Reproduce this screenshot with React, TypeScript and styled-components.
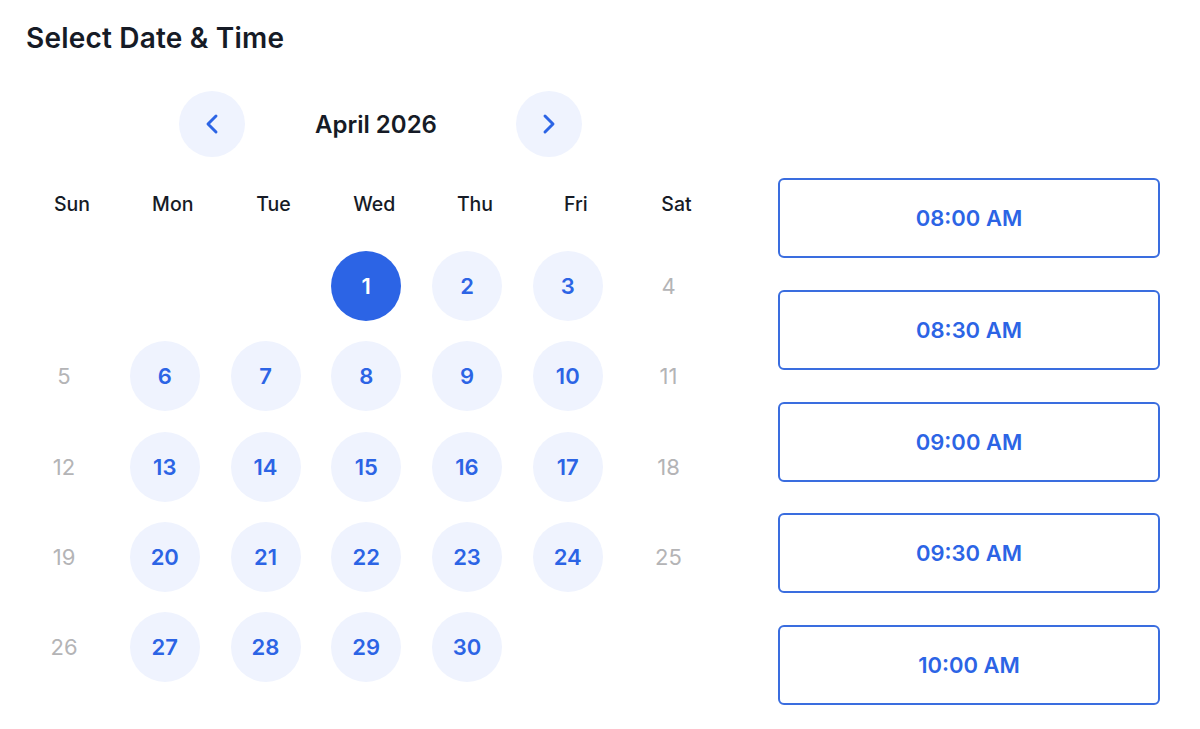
import styled, { createGlobalStyle } from 'styled-components'
import { ChevronLeft, ChevronRight } from 'lucide-react'

const GlobalStyle = createGlobalStyle`
    body {
        margin: 0;
        background: #ffffff;
        font-family: Inter, "Noto Sans", "Liberation Sans", sans-serif;
        color: #161b26;
    }
`

const BLUE = '#2c64e5'
const LIGHT = '#eff3fe'

const Page = styled.div`
    width: 1200px;
    height: 729px;
    box-sizing: border-box;
    padding: 21px 0 0 26px;
`

const Title = styled.h1`
    margin: 0;
    font-size: 28px;
    font-weight: 600;
    line-height: 34px;
    color: #161b26;
    letter-spacing: 0.2px;
`

const Body = styled.div`
    display: flex;
    align-items: flex-start;
    margin-top: 36px;
`

const CalendarPane = styled.div`
    width: 700px;
`

const NavRow = styled.div`
    display: flex;
    align-items: center;
    margin-left: 153px;
`

const NavButton = styled.button`
    width: 66px;
    height: 66px;
    border-radius: 50%;
    border: none;
    background: ${LIGHT};
    color: ${BLUE};
    display: flex;
    align-items: center;
    justify-content: center;
    padding: 0;
    cursor: pointer;
`

const MonthLabel = styled.div`
    width: 271px;
    padding-right: 9px;
    box-sizing: border-box;
    text-align: center;
    font-size: 24px;
    font-weight: 600;
    color: #161b26;
`

const WeekHeader = styled.div`
    display: grid;
    grid-template-columns: repeat(7, 70px);
    column-gap: 30.75px;
    margin: 32px 0 0 11px;
`

const WeekDay = styled.div`
    text-align: center;
    font-size: 19.5px;
    font-weight: 500;
    color: #161b26;
    line-height: 30px;
`

const DaysGrid = styled.div`
    display: grid;
    grid-template-columns: repeat(7, 70px);
    column-gap: 30.75px;
    row-gap: 20.3px;
    margin: 32px 0 0 3px;
`

const Day = styled.div<{ $kind: 'empty' | 'off' | 'open' | 'selected' }>`
    width: 70px;
    height: 70px;
    border-radius: 50%;
    display: flex;
    align-items: center;
    justify-content: center;
    font-size: 22px;
    font-weight: ${p => (p.$kind === 'off' ? 400 : 600)};
    background: ${p => (p.$kind === 'selected' ? BLUE : p.$kind === 'open' ? LIGHT : 'transparent')};
    color: ${p => (p.$kind === 'selected' ? '#ffffff' : p.$kind === 'open' ? BLUE : '#b4b4b6')};
`

const TimeList = styled.div`
    display: flex;
    flex-direction: column;
    gap: 31.75px;
    margin: 87px 0 0 52px;
`

const TimeButton = styled.button`
    width: 382px;
    height: 80px;
    box-sizing: border-box;
    border: 2px solid #3a6ddf;
    border-radius: 6px;
    background: #ffffff;
    color: ${BLUE};
    font-family: inherit;
    font-size: 22px;
    font-weight: 600;
    cursor: pointer;
`

const WEEKDAYS = ['Sun', 'Mon', 'Tue', 'Wed', 'Thu', 'Fri', 'Sat']
const TIMES = ['08:00 AM', '08:30 AM', '09:00 AM', '09:30 AM', '10:00 AM']

// April 2026 starts on a Wednesday
const buildDays = () => {
    const cells: { label: string, kind: 'empty' | 'off' | 'open' | 'selected' }[] = []
    for (let i = 0; i < 3; i++) cells.push({ label: '', kind: 'empty' })
    for (let d = 1; d <= 30; d++) {
        const col = (d + 2) % 7
        const weekend = col === 0 || col === 6
        cells.push({ label: String(d), kind: d === 1 ? 'selected' : weekend ? 'off' : 'open' })
    }
    return cells
}

export default function App() {
    const days = buildDays()
    return <Page>
        <GlobalStyle />
        <Title>Select Date &amp; Time</Title>
        <Body>
            <CalendarPane>
                <NavRow>
                    <NavButton aria-label="Previous month"><ChevronLeft size={32} strokeWidth={2.2} /></NavButton>
                    <MonthLabel>April 2026</MonthLabel>
                    <NavButton aria-label="Next month"><ChevronRight size={32} strokeWidth={2.2} /></NavButton>
                </NavRow>
                <WeekHeader>
                    {WEEKDAYS.map(w => <WeekDay key={w}>{w}</WeekDay>)}
                </WeekHeader>
                <DaysGrid>
                    {days.map((c, i) => <Day key={i} $kind={c.kind}>{c.label}</Day>)}
                </DaysGrid>
            </CalendarPane>
            <TimeList>
                {TIMES.map(t => <TimeButton key={t}>{t}</TimeButton>)}
            </TimeList>
        </Body>
    </Page>
}
